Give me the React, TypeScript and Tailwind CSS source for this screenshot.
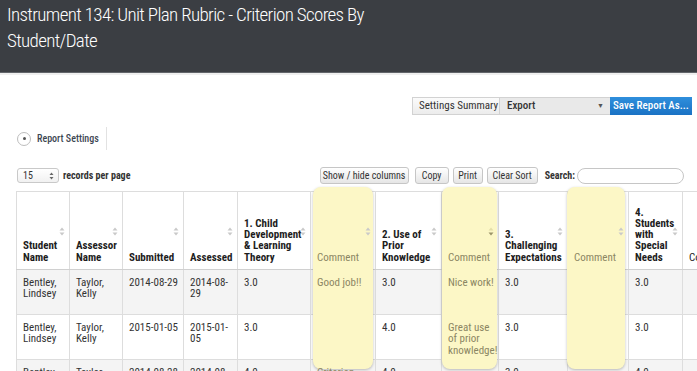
import React from "react";

type Col = { w: number; head: string[]; comment?: boolean; sort?: "both" | "desc" };

const cols: Col[] = [
  { w: 53, head: ["Student", "Name"] },
  { w: 53, head: ["Assessor", "Name"] },
  { w: 61, head: ["Submitted"] },
  { w: 54, head: ["Assessed"] },
  { w: 73, head: ["1. Child", "Development", "& Learning", "Theory"] },
  { w: 65, head: ["Comment"], comment: true },
  { w: 66, head: ["2. Use of", "Prior", "Knowledge"] },
  { w: 57, head: ["Comment"], comment: true, sort: "desc" },
  { w: 69, head: ["3.", "Challenging", "Expectations"] },
  { w: 61, head: ["Comment"], comment: true },
  { w: 54, head: ["4.", "Students", "with", "Special", "Needs"] },
  { w: 70, head: ["Comment"] },
];

const rows: string[][][] = [
  [["Bentley,", "Lindsey"], ["Taylor,", "Kelly"], ["2014-08-29"], ["2014-08-", "29"], ["3.0"], ["Good job!!"], ["3.0"], ["Nice work!"], ["3.0"], [], ["3.0"], []],
  [["Bentley,", "Lindsey"], ["Taylor,", "Kelly"], ["2015-01-05"], ["2015-01-", "05"], ["3.0"], [], ["4.0"], ["Great use", "of prior", "knowledge!"], ["3.0"], [], ["3.0"], []],
  [["Bentley,", "Lindsey"], ["Taylor,", "Kelly"], ["2014-08-28"], ["2014-08-", "28"], ["4.0"], ["Criterion", "met"], ["4.0"], [], ["3.0"], [], ["4.0"], []],
];

function SortIcon({ mode, over }: { mode?: "both" | "desc"; over?: boolean }) {
  return (
    <svg
      width="6"
      height="9"
      viewBox="0 0 6 9"
      className={`absolute right-[4px] top-[35px] ${over ? "z-20" : ""}`}
    >
      <path d="M3 0.5 L5.5 3.5 L0.5 3.5 Z" fill={mode === "desc" ? "#e4dea8" : "#c9c9c9"} />
      <path d="M3 8.5 L5.5 5.5 L0.5 5.5 Z" fill={mode === "desc" ? "#9a9468" : "#c9c9c9"} />
    </svg>
  );
}

function Lines({ lines }: { lines: string[] }) {
  return (
    <>
      {lines.map((l, i) => (
        <div key={i} className="whitespace-nowrap">
          {l}
        </div>
      ))}
    </>
  );
}

const btn =
  "flex shrink-0 items-center justify-center h-[17px] rounded-[3px] border border-[#c6c6c6] bg-gradient-to-b from-white to-[#e6e6e6] whitespace-nowrap";

export default function App() {
  return (
    <div className="w-[697px] h-[371px] overflow-hidden bg-white font-['Roboto_Condensed',sans-serif] text-[#333]">
      {/* Title bar */}
      <div className="h-[73px] bg-[#3b3e43] border-b border-[#62656a] pl-[7px] pt-[2px] text-white text-[19px] leading-[26px] tracking-[-0.65px] font-light">
        <div className="whitespace-nowrap">Instrument 134: Unit Plan Rubric - Criterion Scores By</div>
        <div className="whitespace-nowrap">Student/Date</div>
      </div>
      <div className="h-[2px] bg-[#efefef]" />

      {/* Top toolbar */}
      <div className="mt-[22px] flex justify-end pr-[5px] h-[18px] text-[11px] whitespace-nowrap">
        <div className="flex shrink-0 items-center px-[6px] w-[88px] border border-[#d2d2d2] bg-gradient-to-b from-[#fbfbfb] to-[#ececec] text-[#333]">
          Settings Summary
        </div>
        <div className="flex shrink-0 items-center justify-between pl-[7px] pr-[6px] w-[110px] border-y border-[#d2d2d2] bg-[#e9e9e9] font-medium text-[#333]">
          <span>Export</span>
          <span className="text-[7px] text-[#555]">▼</span>
        </div>
        <div className="flex shrink-0 items-center justify-center w-[82px] bg-gradient-to-b from-[#2f8fdc] to-[#1a72c4] text-white font-medium">
          Save Report As...
        </div>
      </div>

      {/* Report settings */}
      <div className="mt-[12px] flex h-[23px] items-center pl-[17px]">
        <div className="flex shrink-0 items-center justify-center w-[14px] h-[14px] rounded-full border border-[#bdbdbd] bg-white">
          <div className="w-[3px] h-[3px] rounded-full bg-[#555]" />
        </div>
        <span className="ml-[6px] whitespace-nowrap text-[10px] font-medium text-[#3c4652]">Report Settings</span>
        <div className="ml-[7px] h-full w-px bg-[#e2e2e2]" />
      </div>

      {/* Records row */}
      <div className="mt-[17px] flex h-[17px] items-center pl-[17px] pr-[13px] text-[10px] whitespace-nowrap">
        <div className="flex shrink-0 items-center justify-between w-[42px] h-[15px] rounded-[3px] border border-[#c9c9c9] bg-gradient-to-b from-white to-[#f1f1f1] pl-[5px] pr-[4px]">
          <span>15</span>
          <svg width="5" height="8" viewBox="0 0 5 8">
            <path d="M2.5 0.5 L4.5 3 L0.5 3 Z" fill="#666" />
            <path d="M2.5 7.5 L4.5 5 L0.5 5 Z" fill="#666" />
          </svg>
        </div>
        <span className="ml-[4px] font-bold">records per page</span>
        <div className="ml-auto flex items-center">
          <div className={`${btn} w-[89px]`}>Show / hide columns</div>
          <div className={`${btn} ml-[6px] w-[34px]`}>Copy</div>
          <div className={`${btn} ml-[4px] w-[30px]`}>Print</div>
          <div className={`${btn} ml-[4px] w-[51px]`}>Clear Sort</div>
          <span className="ml-[7px] font-bold">Search:</span>
          <div className="ml-[2px] h-[16px] w-[107px] shrink-0 rounded-full border border-[#c6c6c6] bg-white" />
        </div>
      </div>

      {/* Table */}
      <div className="relative ml-[16px] mt-[7px]">
        <table className="table-fixed border-collapse w-[736px] text-[11px] leading-[11.3px]">
          <colgroup>
            {cols.map((c, i) => (
              <col key={i} style={{ width: c.w }} />
            ))}
          </colgroup>
          <thead>
            <tr className="h-[78px]">
              {cols.map((c, i) => (
                <th
                  key={i}
                  className={`relative align-bottom text-left pl-[6px] pr-[8px] pb-[6px] border border-[#dddddd] border-b-[#d0d0d0] ${c.comment || i === 11 ? "font-normal" : "font-bold"}`}
                >
                  <span className={c.comment ? "relative z-20 block text-[#8b8663]" : "block text-[#1d1d1d]"}>
                    <Lines lines={c.head} />
                  </span>
                  {i < 11 && <SortIcon mode={c.sort} over={c.comment} />}
                </th>
              ))}
            </tr>
          </thead>
          <tbody>
            {rows.map((r, ri) => (
              <tr key={ri} className={`h-[45px] ${ri % 2 === 0 ? "bg-[#f4f4f4]" : "bg-white"}`}>
                {r.map((cell, ci) => (
                  <td key={ci} className="align-top pl-[6px] pr-[4px] pt-[7px] border border-[#dddddd]">
                    <span className={cols[ci].comment ? "relative z-20 block text-[#8b8663]" : "block"}>
                      <Lines lines={cell} />
                    </span>
                  </td>
                ))}
              </tr>
            ))}
          </tbody>
        </table>

        {/* Highlight overlays for comment columns */}
        <div className="pointer-events-none absolute left-[297px] top-[-4px] z-10 h-[182px] w-[60px] rounded-[8px] bg-[#fcf7c6] shadow-[0_1px_3px_rgba(0,0,0,0.25)]" />
        <div className="pointer-events-none absolute left-[426px] top-[-4px] z-10 h-[182px] w-[55px] rounded-[8px] bg-[#fcf7c6] shadow-[0_1px_3px_rgba(0,0,0,0.25)]" />
        <div className="pointer-events-none absolute left-[551px] top-[-4px] z-10 h-[182px] w-[58px] rounded-[8px] bg-[#fcf7c6] shadow-[0_1px_3px_rgba(0,0,0,0.25)]" />
      </div>
    </div>
  );
}
